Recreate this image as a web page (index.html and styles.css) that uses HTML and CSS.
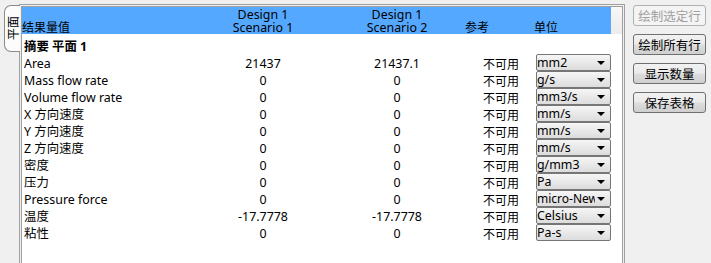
FILE: index.html
```html
<!DOCTYPE html>
<html>
<head>
<meta charset="utf-8">
<link rel="stylesheet" href="styles.css">
</head>
<body>
<div class="app">
  <div class="tab"><span class="tab-label">平面</span></div>
  <div class="panel">
    <div class="panel-inner">
      <div class="head">
        <div class="hcell hname">结果量值</div>
        <div class="hcell hval"><div>Design 1</div><div>Scenario 1</div></div>
        <div class="hcell hval"><div>Design 1</div><div>Scenario 2</div></div>
        <div class="hcell href">参考</div>
        <div class="hcell hunit">单位</div>
        <div class="hfill"></div>
      </div>
      <div class="rows">
        <div class="row"><div class="c name bold">摘要 平面 1</div></div>
        <div class="row"><div class="c name">Area</div><div class="c val">21437</div><div class="c val">21437.1</div><div class="c ref">不可用</div><div class="c unit"><div class="dd"><span class="dd-text">mm2</span><span class="dd-arrow"></span></div></div></div>
        <div class="row"><div class="c name">Mass flow rate</div><div class="c val">0</div><div class="c val">0</div><div class="c ref">不可用</div><div class="c unit"><div class="dd"><span class="dd-text">g/s</span><span class="dd-arrow"></span></div></div></div>
        <div class="row"><div class="c name">Volume flow rate</div><div class="c val">0</div><div class="c val">0</div><div class="c ref">不可用</div><div class="c unit"><div class="dd"><span class="dd-text">mm3/s</span><span class="dd-arrow"></span></div></div></div>
        <div class="row"><div class="c name">X 方向速度</div><div class="c val">0</div><div class="c val">0</div><div class="c ref">不可用</div><div class="c unit"><div class="dd"><span class="dd-text">mm/s</span><span class="dd-arrow"></span></div></div></div>
        <div class="row"><div class="c name">Y 方向速度</div><div class="c val">0</div><div class="c val">0</div><div class="c ref">不可用</div><div class="c unit"><div class="dd"><span class="dd-text">mm/s</span><span class="dd-arrow"></span></div></div></div>
        <div class="row"><div class="c name">Z 方向速度</div><div class="c val">0</div><div class="c val">0</div><div class="c ref">不可用</div><div class="c unit"><div class="dd"><span class="dd-text">mm/s</span><span class="dd-arrow"></span></div></div></div>
        <div class="row"><div class="c name">密度</div><div class="c val">0</div><div class="c val">0</div><div class="c ref">不可用</div><div class="c unit"><div class="dd"><span class="dd-text">g/mm3</span><span class="dd-arrow"></span></div></div></div>
        <div class="row"><div class="c name">压力</div><div class="c val">0</div><div class="c val">0</div><div class="c ref">不可用</div><div class="c unit"><div class="dd"><span class="dd-text">Pa</span><span class="dd-arrow"></span></div></div></div>
        <div class="row"><div class="c name">Pressure force</div><div class="c val">0</div><div class="c val">0</div><div class="c ref">不可用</div><div class="c unit"><div class="dd"><span class="dd-text clip">micro-Newton</span><span class="dd-arrow"></span></div></div></div>
        <div class="row"><div class="c name">温度</div><div class="c val">-17.7778</div><div class="c val">-17.7778</div><div class="c ref">不可用</div><div class="c unit"><div class="dd"><span class="dd-text">Celsius</span><span class="dd-arrow"></span></div></div></div>
        <div class="row"><div class="c name">粘性</div><div class="c val">0</div><div class="c val">0</div><div class="c ref">不可用</div><div class="c unit"><div class="dd"><span class="dd-text">Pa-s</span><span class="dd-arrow"></span></div></div></div>
      </div>
    </div>
  </div>
  <div class="buttons">
    <div class="btn disabled">绘制选定行</div>
    <div class="btn">绘制所有行</div>
    <div class="btn">显示数量</div>
    <div class="btn">保存表格</div>
  </div>
</div>
</body>
</html>
```
FILE: styles.css
```css
html, body {
  margin: 0;
  padding: 0;
  background: #f0f0f0;
  height: 263px;
  overflow: hidden;
}
body {
  font-family: "Noto Sans", "Noto Sans CJK SC", sans-serif;
  font-size: 12.4px;
  color: #000;
}
.app {
  display: flex;
  align-items: flex-start;
  padding-top: 4px;
  height: 259px;
}
.tab {
  margin-left: 4px;
  margin-top: 1px;
  width: 15px;
  height: 45px;
  border: 1px solid #8a8a8a;
  border-right: none;
  border-radius: 7px 0 0 7px;
  background: #fcfcfc;
  display: flex;
  align-items: center;
  justify-content: center;
  margin-right: -1px;
  position: relative;
  z-index: 1;
}
.tab-label {
  writing-mode: vertical-rl;
  text-orientation: sideways;
  transform: rotate(180deg);
  line-height: 14px;
  font-size: 12px;
  font-family: "Noto Sans CJK SC", sans-serif;
}
.panel {
  width: 606px;
  height: 259px;
  border: 1px solid #a0a0a0;
  border-bottom: none;
  padding: 1px 1px 0 1px;
  background: #f0f0f0;
  box-sizing: border-box;
}
.panel-inner {
  height: 100%;
  border: 1px solid #a0a0a0;
  border-bottom: none;
  background: #fff;
  box-sizing: border-box;
}
.head {
  display: grid;
  grid-template-columns: 174px 134px 134px 70px 77px 1fr;
  height: 27px;
  background: #55a8ff;
}
.hfill {
  background: linear-gradient(#f7f7f7, #ececec);
}
.hcell {
  line-height: 13px;
  padding-top: 1px;
}
.hname {
  padding-top: 14px;
  font-size: 12px;
}
.hval {
  text-align: center;
}
.href, .hunit {
  padding-top: 14px;
  font-size: 12px;
}
.href { padding-left: 1px; }
.hunit { padding-left: 0; }
.rows {
  padding-top: 4px;
}
.row {
  display: grid;
  grid-template-columns: 174px 134px 134px 55px 92px;
  height: 17px;
  line-height: 17px;
  white-space: nowrap;
}
.c.name { padding-left: 2px; }
.bold { font-weight: bold; }
.c.val { text-align: center; }
.c.ref { text-align: right; font-size: 12px; font-family: "Noto Sans CJK SC", sans-serif; }
.c.unit { padding-left: 17px; }
.dd {
  width: 75px;
  height: 17px;
  box-sizing: border-box;
  border: 1px solid #767676;
  border-radius: 2px;
  background: linear-gradient(#f6f6f6, #dcdcdc);
  display: flex;
  align-items: center;
  margin-top: -1px;
}
.dd-text {
  flex: 1;
  min-width: 0;
  overflow: hidden;
  line-height: 15px;
}
.dd-text.clip {
  font-size: 12px;
}
.dd-arrow {
  flex: none;
  width: 0;
  height: 0;
  border-left: 4px solid transparent;
  border-right: 4px solid transparent;
  border-top: 4px solid #000;
  margin: 0 5px 0 2px;
}
.buttons {
  margin-left: 8px;
  display: flex;
  flex-direction: column;
  gap: 8px;
  padding-top: 1px;
}
.btn {
  width: 73px;
  height: 21px;
  box-sizing: border-box;
  border: 1px solid #707070;
  border-radius: 3px;
  background: linear-gradient(#f2f2f2 0%, #ebebeb 45%, #dddddd 55%, #cfcfcf 100%);
  text-align: center;
  line-height: 19px;
  font-family: "Noto Sans CJK SC", sans-serif;
  font-size: 12.5px;
}
.btn.disabled {
  border-color: #adb2b5;
  background: #f4f4f4;
  color: #a0a0a0;
}
```
